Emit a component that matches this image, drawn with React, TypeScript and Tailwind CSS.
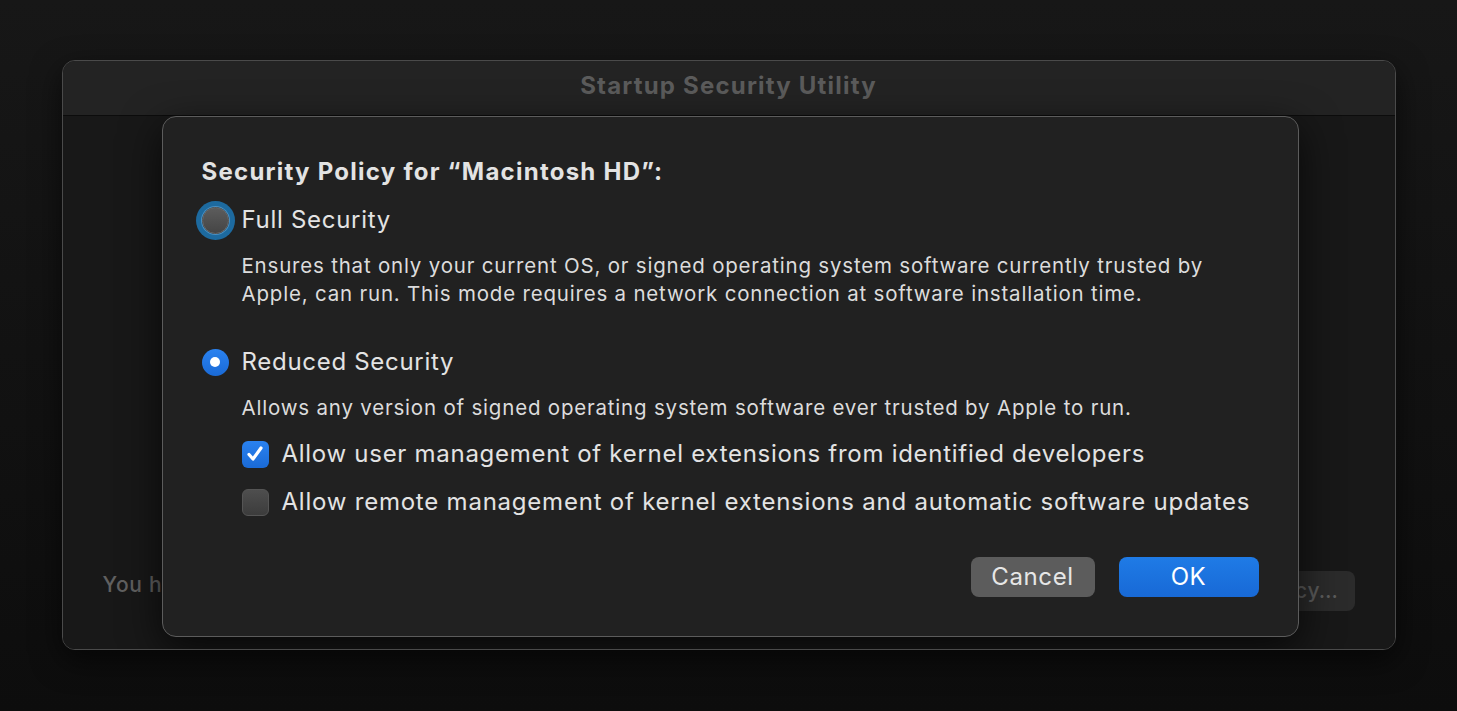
const font = { fontFamily: 'Inter, "Noto Sans", sans-serif' };

function Radio({ checked, focused }: { checked?: boolean; focused?: boolean }) {
  if (checked) {
    return (
      <span className="flex h-[27px] w-[27px] shrink-0 items-center justify-center rounded-full bg-gradient-to-b from-[#2a82f0] to-[#1a6ad6]">
        <span className="h-[10px] w-[10px] rounded-full bg-white" />
      </span>
    );
  }
  return (
    <span
      className={
        "h-[27px] w-[27px] shrink-0 rounded-full border border-[#6a6a6a] bg-gradient-to-b from-[#5c5c5c] to-[#454545] " +
        (focused ? "shadow-[0_0_0_1px_#4a8fc0,0_0_0_6px_#1d6a9f]" : "")
      }
    />
  );
}

function Checkbox({ checked }: { checked?: boolean }) {
  if (checked) {
    return (
      <span className="flex h-[27px] w-[27px] shrink-0 items-center justify-center rounded-[6px] bg-gradient-to-b from-[#2a82f0] to-[#1a6ad6]">
        <svg width="20" height="20" viewBox="0 0 20 20" fill="none">
          <path d="M4 10.5l4 4.5 8-11" stroke="white" strokeWidth="3.2" strokeLinecap="round" strokeLinejoin="round" />
        </svg>
      </span>
    );
  }
  return <span className="h-[27px] w-[27px] shrink-0 rounded-[6px] border border-[#555] bg-gradient-to-b from-[#4e4e4e] to-[#3c3c3c]" />;
}

export default function App() {
  return (
    <main style={font} className="flex h-[711px] w-full justify-center bg-gradient-to-b from-[#171717] to-[#0d0d0d] pt-[60px]">
      <div className="relative flex h-[590px] w-[1334px] flex-col overflow-hidden rounded-[13px] border border-[#4a4a4a] shadow-[0_10px_30px_rgba(0,0,0,0.6)]">
        <div className="flex h-[55px] shrink-0 items-center justify-center border-b border-[#0c0c0c] bg-[#232323] pb-1">
          <span className="text-[24px] font-bold tracking-[1.2px] text-[#5b5b5b]">Startup Security Utility</span>
        </div>
        <div className="flex flex-1 flex-col justify-end bg-[#181818] px-10 pb-[38px]">
          <div className="flex items-start justify-between">
            <span className="text-[21px] font-medium leading-[28px] tracking-[0.7px] text-[#606060]">You have not set a firmware password.</span>
            <span className="flex h-10 items-center rounded-[8px] bg-[#2b2b2b] px-4 text-[21px] font-medium tracking-[0.7px] text-[#5c5c5c]">
              Change Security Policy…
            </span>
          </div>
        </div>

        <div className="absolute left-[99px] top-[55px] flex h-[521px] w-[1137px] flex-col rounded-[14px] border border-[#5c5c5c] bg-[#212121] px-[39px] pt-[41px] shadow-[0_12px_40px_rgba(0,0,0,0.7)]">
          <h1 className="text-[24px] font-bold leading-[28px] tracking-[1.25px] text-[#e3e3e3]">Security Policy for “Macintosh HD”:</h1>

          <div className="mt-[20px] flex h-[28px] items-center gap-[13px]">
            <Radio focused />
            <span className="text-[24px] tracking-[0.7px] text-[#e3e3e3]">Full Security</span>
          </div>
          <p className="mt-[18px] pl-10 text-[20.5px] leading-[28px] tracking-[0.8px] text-[#dcdcdc]">
            Ensures that only your current OS, or signed operating system software currently trusted by
            <br />
            Apple, can run. This mode requires a network connection at software installation time.
          </p>

          <div className="mt-[40px] flex h-[28px] items-center gap-[13px]">
            <Radio checked />
            <span className="text-[24px] tracking-[0.7px] text-[#e3e3e3]">Reduced Security</span>
          </div>
          <p className="mt-[18px] pl-10 text-[20.5px] leading-[28px] tracking-[0.8px] text-[#dcdcdc]">
            Allows any version of signed operating system software ever trusted by Apple to run.
          </p>

          <div className="mt-[18px] flex h-[28px] items-center gap-[13px] pl-10">
            <Checkbox checked />
            <span className="text-[24px] tracking-[0.72px] text-[#e3e3e3]">Allow user management of kernel extensions from identified developers</span>
          </div>
          <div className="mt-[20px] flex h-[28px] items-center gap-[13px] pl-10">
            <Checkbox />
            <span className="text-[24px] tracking-[0.78px] text-[#e3e3e3]">Allow remote management of kernel extensions and automatic software updates</span>
          </div>

          <div className="mt-[41px] flex justify-end gap-6">
            <button className="h-10 w-[124px] rounded-[8px] bg-[#5c5c5c] text-[24px] tracking-[0.6px] text-[#e6e6e6]">Cancel</button>
            <button className="h-10 w-[140px] rounded-[8px] bg-gradient-to-b from-[#1f7be6] to-[#1869d6] text-[24px] tracking-[0.6px] text-white">OK</button>
          </div>
        </div>
      </div>
    </main>
  );
}
